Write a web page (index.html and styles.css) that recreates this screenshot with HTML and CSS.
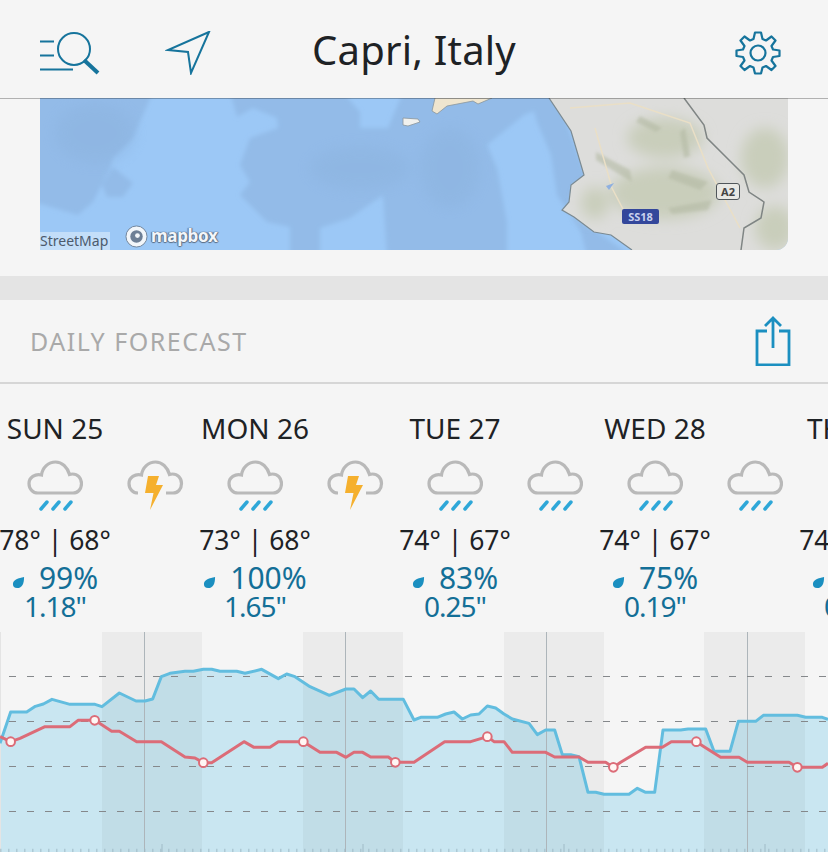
FILE: index.html
```html
<!DOCTYPE html>
<html lang="en">

<head>
  <meta charset="UTF-8">
  <meta name="viewport" content="width=device-width, initial-scale=1.0">
  <title>Capri, Italy</title>
  <link rel="stylesheet" href="styles.css">
</head>

<body>
  <svg class="icon-defs" width="0" height="0" aria-hidden="true">
    <symbol id="cloud" viewBox="0 0 56 36">
      <path d="M11 33 H46 C51 33 54.500 29 54.500 23.500 C54.500 18 50.500 14 45.500 14 C44.500 14 43.500 14.200 42.500 14.500 C40.500 7 35 2 28.500 2 C21.500 2 15.500 7.500 14.500 15 C8 13.500 2 17.500 2 23.500 C2 29 6 33 11 33 Z" fill="none" stroke="#b9b9b9" stroke-width="3.200"/>
    </symbol>
    <symbol id="rain" viewBox="0 0 56 52">
      <use href="#cloud" width="56" height="36"/>
      <path d="M14 49 L20 42 M26 49 L32 42 M38 49 L44 42" stroke="#2ea7d8" stroke-width="3.500" stroke-linecap="round"/>
    </symbol>
    <symbol id="storm" viewBox="0 0 56 52">
      <path d="M11 33 C6 33 2 29 2 23.500 C2 17.500 8 13.500 14.500 15 C15.500 7.500 21.500 2 28.500 2 C35 2 40.500 7 42.500 14.500 C43.500 14.200 44.500 14 45.500 14 C50.500 14 54.500 18 54.500 23.500 C54.500 29 51 33 46 33 H39" fill="none" stroke="#b9b9b9" stroke-width="3.200"/>
      <path d="M21 16 H32 L29 25 H36 L23 50 L26.500 33 H18 Z" fill="#f5b02e"/>
    </symbol>
    <symbol id="drop" viewBox="0 0 14 14">
      <path d="M13 1 C13 8 11 13 5.500 13 C2.500 13 1 11 1 8.500 C1 4 7 2 13 1 Z" fill="#1b8fc0"/>
    </symbol>
  </svg>

  <header class="top-bar">
    <div class="top-icons">
      <svg class="icon-search" viewBox="0 0 60 44" fill="none" stroke="#16749c" stroke-width="2">
        <path d="M0 10.500 H14 M0 24.500 H14 M0 38.500 H33"/>
        <circle cx="34" cy="18" r="16"/>
        <path d="M44 29 L58 42" stroke-width="4"/>
      </svg>
      <svg class="icon-nav" viewBox="0 0 46 44" fill="none" stroke="#16749c" stroke-width="2">
        <path d="M44 1 L3 19 L23 21 L26 42 Z"/>
      </svg>
    </div>
    <h1>Capri, Italy</h1>
    <svg class="icon-gear" viewBox="0 0 46 44" fill="none" stroke="#16749c" stroke-width="2.200">
      <circle cx="23" cy="22" r="7.500"/>
      <path d="M20 1.500 H26 L27.500 8 L31 9.500 L36.500 5.500 L40.500 9.500 L36.500 15 L38 18.500 L44.500 19.500 V25 L38 26 L36.500 29.500 L40.500 35 L36.500 39 L31 35 L27.500 36.500 L26 42.500 H20 L18.500 36.500 L15 35 L9.500 39 L5.500 35 L9.500 29.500 L8 26 L1.500 25 V19.500 L8 18.500 L9.500 15 L5.500 9.500 L9.500 5.500 L15 9.500 L18.500 8 Z" stroke-linejoin="round"/>
    </svg>
  </header>

  <section class="map-wrap">
    <div class="map">
      <svg class="map-art" viewBox="0 0 748 152" preserveAspectRatio="none">
        <defs>
          <filter id="soft"><feGaussianBlur stdDeviation="2"/></filter>
          <filter id="softer"><feGaussianBlur stdDeviation="7"/></filter>
          <filter id="hill"><feGaussianBlur stdDeviation="1.500"/></filter>
        </defs>
        <rect width="748" height="152" fill="#9cc8f6"/>
        <g fill="#93bbe8" filter="url(#soft)">
          <path d="M-6 -6 H113 L103 17 L93 40 L73 60 L70 70 L53 104 L38 117 L-6 104 Z"/>
          <path d="M62 87 L73 69 L93 85 L83 99 L67 99 Z"/>
          <path d="M190 -6 H303 L320 14 L320 30 L348 30 L363 -6 H515 L547 80 L530 105 L524 112 L560 136 L592 158 H547 L541 134 L517 97 L511 57 L497 24 L494 13 L484 17 L447 47 L457 70 L467 124 L467 158 H347 L343 97 L310 120 L280 130 L280 158 H250 L250 129 L227 124 L200 97 L210 84 L200 67 L210 40 L238 30 L237 20 L213 10 L197 19 Z"/>
        </g>
        <g fill="#8bb2de" filter="url(#softer)" opacity=".45">
          <ellipse cx="55" cy="35" rx="40" ry="30"/>
          <ellipse cx="320" cy="70" rx="50" ry="22"/>
          <ellipse cx="410" cy="70" rx="30" ry="40"/>
        </g>
        <path d="M509 0 L531 33 L544 77 L531 87 L529 104 L522 112 L534 119 L554 134 L571 137 L592 152 H748 V0 Z" fill="#dddddb"/>
        <g fill="#c9cebb" filter="url(#softer)">
          <ellipse cx="625" cy="40" rx="38" ry="20"/>
          <ellipse cx="625" cy="95" rx="55" ry="26"/>
          <ellipse cx="725" cy="60" rx="24" ry="30"/>
          <ellipse cx="735" cy="130" rx="20" ry="22"/>
          <ellipse cx="555" cy="105" rx="14" ry="16"/>
        </g>
        <g fill="#b4baa4" filter="url(#hill)" opacity=".6">
          <path d="M600 18 L622 30 L616 34 L596 24 Z"/>
          <path d="M556 54 L590 72 L592 84 L556 62 Z"/>
          <path d="M645 30 L650 58 L644 60 L640 34 Z"/>
          <path d="M632 72 L668 84 L660 92 L628 80 Z"/>
          <path d="M628 110 L672 102 L668 112 L632 116 Z"/>
        </g>
        <g fill="none" stroke="#eadfc6" stroke-width="1.500">
          <path d="M530 10 L590 5 L650 25 L668 70 L700 130"/>
          <path d="M555 30 L572 90 L585 115"/>
        </g>
        <path d="M509 0 L531 33 L544 77 L531 87 L529 104 L522 112 L534 119 L554 134 L571 137 L592 152" fill="none" stroke="#7b8a92" stroke-width="1.200"/>
        <path d="M644 0 L664 27 L667 40 L694 67 L704 77 L709 94 L724 104 L721 120 L704 130 L701 152" fill="none" stroke="#7f8584" stroke-width="1.500"/>
        <path d="M395 0 L392 13 L397 16 L407 8 L433 3 L438 6 L452 0 Z" fill="#efe5cf" stroke="#8a959c" stroke-width=".8"/>
        <path d="M363 20 L378 21 L380 24 L368 28 L363 27 Z" fill="#f1f1ee" stroke="#8a959c" stroke-width=".8"/>
        <path d="M566 88 L574 85 L569 92 Z" fill="#8fb0e0"/>
      </svg>
      <span class="map-tag">StreetMap</span>
      <div class="mapbox">
        <svg class="mapbox-pin" viewBox="0 0 24 24">
          <circle cx="12" cy="12" r="11" fill="#f2f6fa" stroke="#71849a" stroke-width="1"/>
          <circle cx="12" cy="12" r="6.500" fill="#6d7f96"/>
          <circle cx="13" cy="11" r="2.500" fill="#f2f6fa"/>
        </svg>
        <span>mapbox</span>
      </div>
      <span class="shield shield-a">A2</span>
      <span class="shield shield-s">SS18</span>
    </div>
  </section>

  <div class="divider"></div>

  <section class="forecast-head">
    <h2>DAILY FORECAST</h2>
    <svg class="icon-share" viewBox="0 0 36 50" fill="none" stroke="#1b8fc0" stroke-width="2.800">
      <path d="M12 15 H2 V49 H34 V15 H24"/>
      <path d="M18 32 V2 M10 10 L18 2 L26 10"/>
    </svg>
  </section>

  <section class="days">
    <div class="days-row">
      <div class="day">
        <div class="day-name">SUN 25</div>
        <div class="day-icons">
          <svg class="wx"><use href="#rain"/></svg>
          <svg class="wx"><use href="#storm"/></svg>
        </div>
        <div class="temps">78° | 68°</div>
        <div class="chance"><svg class="drop"><use href="#drop"/></svg>99%</div>
        <div class="amount">1.18"</div>
      </div>
      <div class="day">
        <div class="day-name">MON 26</div>
        <div class="day-icons">
          <svg class="wx"><use href="#rain"/></svg>
          <svg class="wx"><use href="#storm"/></svg>
        </div>
        <div class="temps">73° | 68°</div>
        <div class="chance"><svg class="drop"><use href="#drop"/></svg>100%</div>
        <div class="amount">1.65"</div>
      </div>
      <div class="day">
        <div class="day-name">TUE 27</div>
        <div class="day-icons">
          <svg class="wx"><use href="#rain"/></svg>
          <svg class="wx"><use href="#rain"/></svg>
        </div>
        <div class="temps">74° | 67°</div>
        <div class="chance"><svg class="drop"><use href="#drop"/></svg>83%</div>
        <div class="amount">0.25"</div>
      </div>
      <div class="day">
        <div class="day-name">WED 28</div>
        <div class="day-icons">
          <svg class="wx"><use href="#rain"/></svg>
          <svg class="wx"><use href="#rain"/></svg>
        </div>
        <div class="temps">74° | 67°</div>
        <div class="chance"><svg class="drop"><use href="#drop"/></svg>75%</div>
        <div class="amount">0.19"</div>
      </div>
      <div class="day">
        <div class="day-name">THU 29</div>
        <div class="day-icons"></div>
        <div class="temps">74° | 67°</div>
        <div class="chance"><svg class="drop"><use href="#drop"/></svg>60%</div>
        <div class="amount">0.10"</div>
      </div>
    </div>
  </section>

  <!-- chart coords are the reference zoomed 3x -->
  <svg class="chart" viewBox="0 0 2484 660">
    <path d="M0 660 V334 L32 240 H80 L106 223 L130 216 L156 202 L210 217 H285 L306 224 L358 183 L408 207 H435 L458 201 L484 134 L510 124 L555 118 H580 L610 112 H635 L660 118 H710 L735 124 L785 112 L835 140 L860 126 L885 134 L930 164 L988 190 L1038 171 H1062 L1088 197 L1112 177 L1136 202 H1210 L1242 264 L1262 256 H1312 L1337 246 L1362 240 L1387 261 L1412 249 L1437 246 L1462 222 L1487 228 L1512 246 L1537 261 L1587 274 L1612 308 L1637 294 H1664 L1687 368 H1712 L1737 374 L1764 481 H1787 L1812 487 H1887 L1912 469 L1937 481 H1964 L1989 294 H2042 L2064 291 H2117 L2142 358 H2190 L2215 268 H2267 L2290 250 H2392 L2417 256 H2467 L2484 262 V660 Z" fill="#c9e6f1"/>
    <g fill="#000" fill-opacity=".04">
      <rect x="306" width="300" height="660"/>
      <rect x="909" width="300" height="660"/>
      <rect x="1512" width="300" height="660"/>
      <rect x="2112" width="303" height="660"/>
    </g>
    <path d="M433.500 0 V660 M1036.500 0 V660 M1639.500 0 V660 M2242.500 0 V660" stroke="#adb5ba" stroke-width="3"/>
    <path d="M1.500 0 V660" stroke="#e4e4e4" stroke-width="3"/>
    <path d="M0 133.500 H2484 M0 268.500 H2484 M0 403.500 H2484 M0 538.500 H2484" stroke="#85888b" stroke-width="3" stroke-dasharray="21 33" stroke-dashoffset="-27"/>
    <path d="M0 655 H2484" stroke="#a0bbc7" stroke-width="10" stroke-dasharray="3 21" stroke-dashoffset="-1"/>
    <path d="M486 660 V636 M1089 660 V636 M1692 660 V636 M2295 660 V636" stroke="#a0bbc7" stroke-width="3"/>
    <polyline class="line-blue" points="0,334 32,240 80,240 106,223 130,216 156,202 210,217 285,217 306,224 358,183 408,207 435,207 458,201 484,134 510,124 555,118 580,118 610,112 635,112 660,118 710,118 735,124 785,112 835,140 860,126 885,134 930,164 988,190 1038,171 1062,171 1088,197 1112,177 1136,202 1210,202 1242,264 1262,256 1312,256 1337,246 1362,240 1387,261 1412,249 1437,246 1462,222 1487,228 1512,246 1537,261 1587,274 1612,308 1637,294 1664,294 1687,368 1712,368 1737,374 1764,481 1787,481 1812,487 1887,487 1912,469 1937,481 1964,481 1989,294 2042,294 2064,291 2117,291 2142,358 2190,358 2215,268 2267,268 2290,250 2392,250 2417,256 2467,256 2484,262"/>
    <polyline class="line-red" points="0,314 32,329 60,319 135,284 210,284 234,265 285,265 335,298 358,298 410,329 484,329 555,375 585,378 610,392 635,392 732,329 762,346 810,346 835,329 910,329 960,361 1010,361 1038,376 1062,361 1088,361 1112,375 1165,375 1186,391 1242,391 1334,329 1412,329 1462,314 1482,329 1512,329 1537,361 1637,361 1664,375 1737,375 1764,391 1817,391 1840,406 1862,391 1937,346 1987,346 2014,329 2089,329 2112,344 2162,376 2217,376 2242,391 2367,391 2392,406 2467,406 2484,394"/>
    <g class="marks">
      <circle cx="32" cy="329" r="13"/>
      <circle cx="284" cy="265" r="13"/>
      <circle cx="610" cy="392" r="13"/>
      <circle cx="910" cy="329" r="13"/>
      <circle cx="1186" cy="391" r="13"/>
      <circle cx="1462" cy="314" r="13"/>
      <circle cx="1840" cy="406" r="13"/>
      <circle cx="2089" cy="329" r="13"/>
      <circle cx="2392" cy="406" r="13"/>
    </g>
  </svg>
</body>

</html>
```

FILE: styles.css
```css
* {
  box-sizing: border-box;
}

html,
body {
  height: 852px;
  overflow: hidden;
}

body {
  margin: 0;
  background-color: #f5f5f5;
  color: #1e2225;
  font-family: "Noto Sans", Arial, sans-serif;
}

.icon-defs {
  position: absolute;
}

.top-bar {
  display: flex;
  align-items: center;
  height: 99px;
  border-bottom: 1px solid rgba(0, 0, 0, 0.28);
  position: relative;
  z-index: 1;
}

.top-bar h1 {
  flex: 1;
  margin: 0;
  font-size: 40px;
  font-weight: 400;
  letter-spacing: 0.2px;
  text-align: center;
}

.top-icons {
  display: flex;
  align-items: center;
  gap: 65px;
  position: absolute;
  left: 40px;
  top: 31px;
}

.icon-search {
  width: 60px;
  height: 44px;
}

.icon-nav {
  width: 46px;
  height: 44px;
}

.icon-gear {
  width: 46px;
  height: 44px;
  position: absolute;
  right: 47px;
  top: 31px;
}

.map-wrap {
  margin-top: -1px;
  padding: 0 40px;
  height: 178px;
}

.map {
  position: relative;
  height: 152px;
  overflow: hidden;
  border-radius: 0 0 12px 0;
}

.map-art {
  display: block;
  width: 100%;
  height: 100%;
}

.map-tag {
  position: absolute;
  left: 0;
  bottom: 0;
  padding: 0 2px 0 0;
  background-color: rgba(255, 255, 255, 0.4);
  color: #4c5a6c;
  font-size: 14px;
  line-height: 18px;
}

.mapbox {
  display: flex;
  align-items: center;
  gap: 3px;
  position: absolute;
  left: 85px;
  bottom: 2px;
  color: #f2f6fa;
  font-size: 17px;
  font-weight: 700;
  letter-spacing: -0.3px;
  line-height: 24px;
  text-shadow: 0 0 1px #5d7088, 1px 0 1px #5d7088, -1px 0 1px #5d7088, 0 1px 1px #5d7088;
}

.mapbox-pin {
  width: 23px;
  height: 23px;
}

.shield {
  position: absolute;
  font-size: 11px;
  font-weight: 700;
  line-height: 15px;
  text-align: center;
}

.shield-a {
  left: 676px;
  top: 85px;
  width: 24px;
  height: 17px;
  border: 1px solid #50565a;
  border-radius: 3px;
  background-color: #e8e8e4;
  color: #444;
}

.shield-s {
  left: 582px;
  top: 111px;
  width: 37px;
  height: 15px;
  border-radius: 2px;
  background-color: #33479b;
  color: #c8d0ee;
}

.divider {
  height: 24px;
  background-color: #e4e4e4;
}

.forecast-head {
  display: flex;
  align-items: center;
  justify-content: space-between;
  height: 84px;
  padding: 0 37px 0 30px;
  border-bottom: 2px solid #d6d6d6;
}

.forecast-head h2 {
  margin: 0;
  color: #a9a9a9;
  font-size: 25px;
  font-weight: 400;
  letter-spacing: 1.5px;
}

.icon-share {
  width: 36px;
  height: 50px;
}

.days {
  height: 248px;
  overflow: hidden;
}

.days-row {
  display: flex;
  width: 1000px;
  margin-left: -45px;
}

.day {
  flex: 0 0 200px;
  min-width: 0;
  padding-top: 26px;
  text-align: center;
}

.day-name {
  font-size: 28px;
  line-height: 36px;
}

.day-icons {
  display: flex;
  height: 53px;
  margin-top: 14px;
  padding-left: 50px;
}

.wx {
  flex: 0 0 100px;
  height: 52px;
}

.temps {
  margin-top: 9px;
  font-size: 26.500px;
  line-height: 36px;
}

.chance,
.amount {
  color: #136f97;
  line-height: 28px;
}

.chance {
  margin-top: 6px;
  font-size: 30px;
}

.amount {
  font-size: 28px;
  letter-spacing: -1px;
}

.drop {
  width: 13px;
  height: 13px;
  margin-right: 14px;
}

.chart {
  display: block;
  width: 828px;
  height: 220px;
}

.line-blue,
.line-red {
  fill: none;
  stroke-width: 9;
  stroke-linejoin: round;
}

.line-blue {
  stroke: #62bddf;
}

.line-red {
  stroke: #dc6c78;
}

.marks circle {
  fill: #fff6f4;
  stroke: #dc6c78;
  stroke-width: 6;
}
```
